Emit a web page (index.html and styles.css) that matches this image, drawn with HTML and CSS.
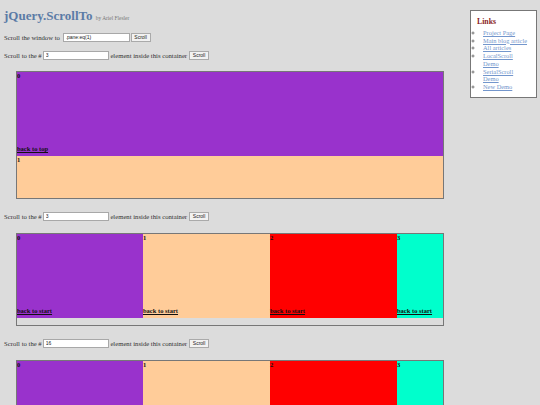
FILE: index.html
```html
<!DOCTYPE html>
<html>
<head>
<meta charset="utf-8">
<title>jQuery.ScrollTo</title>
<link rel="stylesheet" href="styles.css">
</head>
<body>
<div class="page">
  <main class="main">
    <h1 class="title">jQuery.ScrollTo <span class="byline">by Ariel Flesler</span></h1>

    <div class="row row-first">Scroll the window to <input class="field field-window" type="text" value=".pane:eq(1)"><button class="btn">Scroll</button></div>

    <div class="row row-second">Scroll to the #<input class="field" type="text" value="3"> element inside this container<button class="btn btn-gap">Scroll</button></div>
    <div class="box box-vertical">
      <div class="pane pane-0"><span class="num">0</span><a class="back" href="#">back to top</a></div>
      <div class="pane pane-1"><span class="num">1</span></div>
    </div>

    <div class="row">Scroll to the #<input class="field" type="text" value="3"> element inside this container<button class="btn btn-gap">Scroll</button></div>
    <div class="box box-horizontal">
      <div class="strip">
        <div class="pane pane-0"><span class="num">0</span><a class="back" href="#">back to start</a></div>
        <div class="pane pane-1"><span class="num">1</span><a class="back" href="#">back to start</a></div>
        <div class="pane pane-2"><span class="num">2</span><a class="back" href="#">back to start</a></div>
        <div class="pane pane-3"><span class="num">3</span><a class="back" href="#">back to start</a></div>
      </div>
    </div>

    <div class="row">Scroll to the #<input class="field" type="text" value="16"> element inside this container<button class="btn btn-gap">Scroll</button></div>
    <div class="box box-horizontal">
      <div class="strip">
        <div class="pane pane-0"><span class="num">0</span><a class="back" href="#">back to start</a></div>
        <div class="pane pane-1"><span class="num">1</span><a class="back" href="#">back to start</a></div>
        <div class="pane pane-2"><span class="num">2</span><a class="back" href="#">back to start</a></div>
        <div class="pane pane-3"><span class="num">3</span><a class="back" href="#">back to start</a></div>
      </div>
    </div>
  </main>

  <aside class="links">
    <h2 class="links-title">Links</h2>
    <ul class="links-list">
      <li><a href="#">Project Page</a></li>
      <li><a href="#">Main blog article</a></li>
      <li><a href="#">All articles</a></li>
      <li><a href="#">LocalScroll Demo</a></li>
      <li><a href="#">SerialScroll Demo</a></li>
      <li><a href="#">New Demo</a></li>
    </ul>
  </aside>
</div>
</body>
</html>
```

FILE: styles.css
```css
html, body {
  margin: 0;
  padding: 0;
  background: #dcdcdc;
  height: 405px;
  overflow: hidden;
}

body {
  font-family: "Liberation Serif", "Times New Roman", serif;
  font-size: 6.7px;
  color: #333;
}

.page {
  display: flex;
  justify-content: space-between;
  align-items: flex-start;
}

.main {
  padding-left: 4px;
  width: 460px;
}

.title {
  margin: 0;
  padding-top: 8px;
  font-size: 13px;
  line-height: 15px;
  font-weight: bold;
  color: #5b7ba6;
}

.byline {
  font-size: 5.4px;
  font-weight: normal;
  color: #777;
}

.row {
  display: flex;
  align-items: center;
  height: 10px;
  margin-top: 12px;
  white-space: pre;
}

.row-first {
  margin-top: 6px;
}

.row-second {
  margin-top: 8px;
}

.field {
  box-sizing: border-box;
  width: 66px;
  height: 9px;
  margin: 0 0 0 1px;
  padding: 0 2px;
  border: 1px solid #a8a8a8;
  background: #fff;
  font-family: "Liberation Sans", Arial, sans-serif;
  font-size: 5px;
  color: #222;
}

.field-window {
  width: 67px;
}

.btn {
  box-sizing: border-box;
  height: 9px;
  width: 20px;
  margin: 0 0 0 1px;
  padding: 0;
  border: 1px solid #aaa;
  background: #f2f2f2;
  font-family: "Liberation Sans", Arial, sans-serif;
  font-size: 5px;
  color: #222;
}

.btn-gap {
  margin-left: 2px;
}

.box {
  box-sizing: border-box;
  width: 428px;
  margin: 11px 0 0 12px;
  border: 1px solid #777;
  overflow: hidden;
}

.box-vertical {
  height: 128px;
}

.box-horizontal {
  height: 93px;
  margin-top: 12px;
}

.strip {
  display: flex;
  width: 600px;
}

.pane {
  box-sizing: border-box;
  height: 84px;
  display: flex;
  flex-direction: column;
  justify-content: space-between;
  align-items: flex-start;
  padding-bottom: 4px;
  font-size: 6.5px;
  line-height: 7px;
  font-weight: bold;
  color: #111;
}

.box-horizontal .pane {
  width: 127px;
  flex: 0 0 127px;
}

.box-horizontal .pane-0 {
  width: 126px;
  flex-basis: 126px;
}

.num {
  display: block;
}

.back {
  color: #111;
  text-decoration: underline;
}

.pane-0 { background: #9932cc; }
.pane-1 { background: #ffcc99; }
.pane-2 { background: #ff0000; }
.pane-3 { background: #00ffcc; }

.links {
  box-sizing: border-box;
  width: 67px;
  height: 88px;
  margin: 10px 3px 0 0;
  padding: 6px 6px 0 6px;
  background: #fff;
  border: 1px solid #777;
}

.links-title {
  margin: 0;
  font-size: 7.8px;
  line-height: 9px;
  font-weight: bold;
  color: #8b1f1f;
}

.links-list {
  margin: 3px 0 0 0;
  padding: 0 0 0 6px;
  list-style: circle;
  font-size: 6.4px;
  line-height: 7.7px;
  color: #777;
}

.links-list a {
  color: #7396cc;
  text-decoration: underline;
}
```
